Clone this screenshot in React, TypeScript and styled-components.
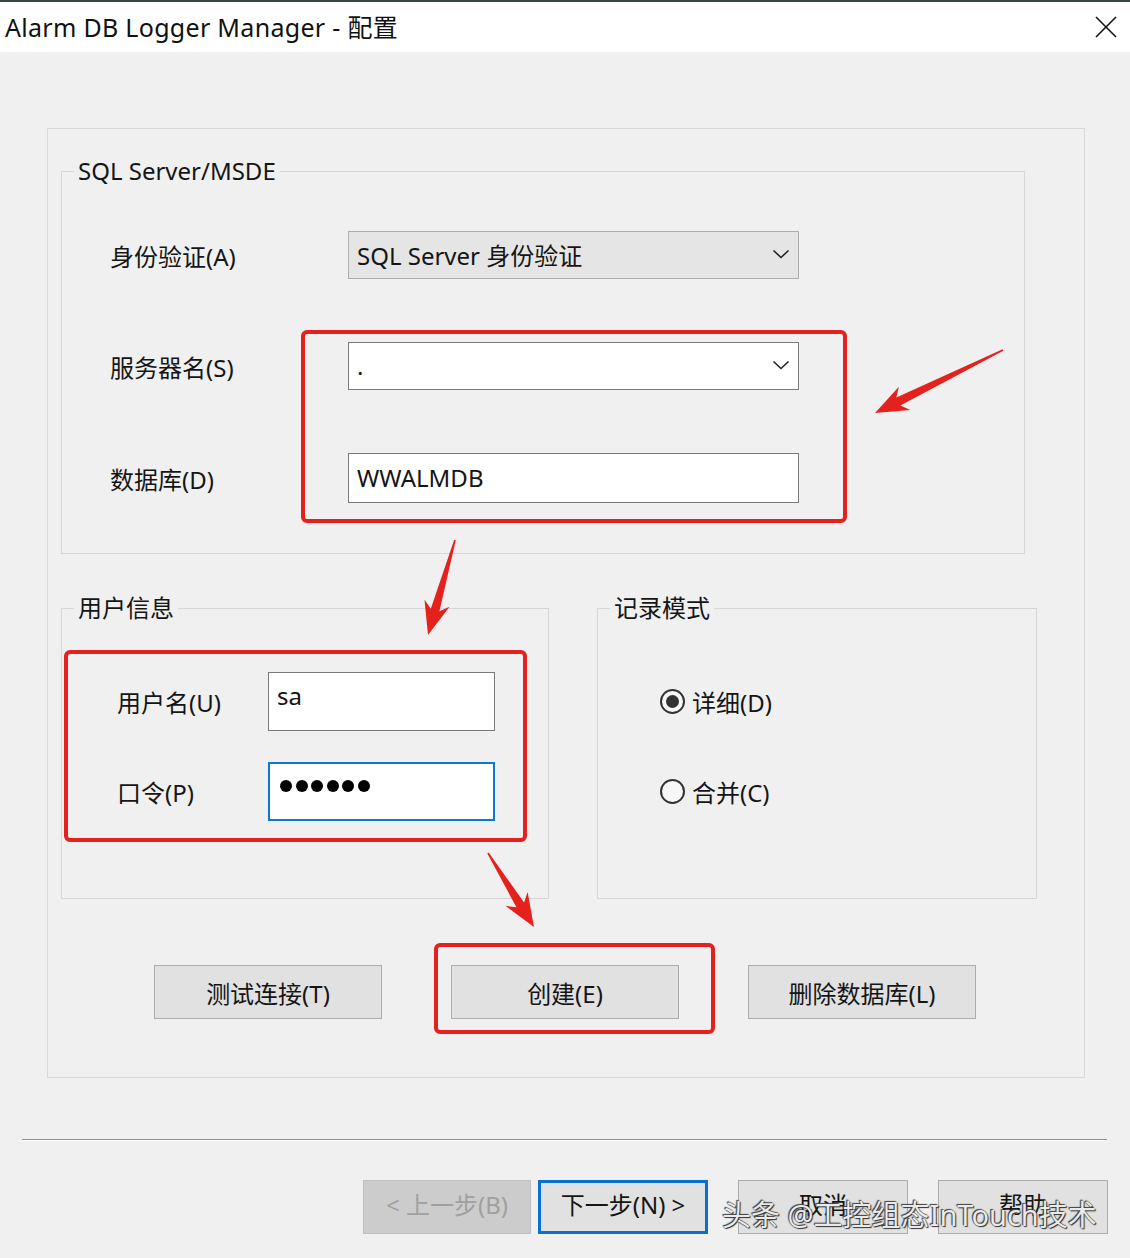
import React from "react";
import styled, { createGlobalStyle } from "styled-components";

const GlobalStyle = createGlobalStyle`
  html, body {
    margin: 0;
    padding: 0;
    background: #f0f0f0;
  }
  body {
    font-family: "Noto Sans", "Noto Sans CJK SC", sans-serif;
    color: #151515;
  }
`;

const Window = styled.div`
  position: relative;
  width: 1130px;
  height: 1258px;
  background: #f0f0f0;
  overflow: hidden;
`;

const TitleBar = styled.div`
  height: 50px;
  border-top: 2px solid #3b4646;
  background: #fff;
  display: flex;
  align-items: center;
  justify-content: space-between;
  padding: 0 13px 0 5px;
`;

const Title = styled.span`
  font-size: 25px;
  letter-spacing: 0.3px;
  color: #111;
  padding-bottom: 2px;
`;

const Body = styled.div`
  padding: 76px 0 0 47px;
`;

const Panel = styled.div`
  box-sizing: border-box;
  width: 1038px;
  height: 950px;
  border: 1px solid #d8d8d8;
  padding: 28px 0 0 13px;
`;

const Group = styled.fieldset<{ $w: number; $h: number }>`
  box-sizing: border-box;
  width: ${({ $w }) => $w}px;
  height: ${({ $h }) => $h}px;
  min-width: 0;
  margin: 0;
  padding: 0;
  border: 1px solid #d6d6d6;
`;

const Legend = styled.legend`
  margin-left: 12px;
  padding: 0 4px;
  font-size: 24px;
  line-height: 28px;
  color: #151515;
`;

const ServerGrid = styled.div`
  display: grid;
  grid-template-columns: 238px 451px;
  grid-template-rows: 48px 48px 50px;
  row-gap: 63px;
  padding: 46px 0 0 48px;
`;

const UserGrid = styled.div`
  display: grid;
  grid-template-columns: 151px 227px;
  grid-auto-rows: 59px;
  row-gap: 31px;
  padding: 50px 0 0 55px;
`;

const RadioList = styled.div`
  display: flex;
  flex-direction: column;
  gap: 31px;
  padding: 50px 0 0 62px;
`;

const Label = styled.span`
  display: flex;
  align-items: center;
  font-size: 24px;
  color: #151515;
`;

const Combo = styled.div<{ $disabled?: boolean }>`
  box-sizing: border-box;
  display: flex;
  align-items: center;
  justify-content: space-between;
  padding: 0 8px 2px 8px;
  background: ${({ $disabled }) => ($disabled ? "#e5e5e5" : "#fff")};
  border: 1px solid ${({ $disabled }) => ($disabled ? "#adadad" : "#7a7a7a")};
  font-size: 24px;
`;

const Field = styled.div<{ $focus?: boolean; $top?: boolean }>`
  box-sizing: border-box;
  display: flex;
  align-items: ${({ $top }) => ($top ? "flex-start" : "center")};
  padding: ${({ $top }) => ($top ? "6px 8px 0" : "0 8px 2px")};
  background: #fff;
  border: ${({ $focus }) => ($focus ? "2px solid #0a78d4" : "1px solid #7a7a7a")};
  font-size: 24px;
`;

const Dots = styled.div`
  display: flex;
  gap: 3.5px;
  padding: 10px 0 0 2px;
`;

const Dot = styled.span`
  width: 12px;
  height: 12px;
  border-radius: 50%;
  background: #000;
`;

const LowerRow = styled.div`
  display: flex;
  gap: 48px;
  margin-top: 40px;
`;

const Radio = styled.div`
  height: 59px;
  display: flex;
  align-items: center;
  gap: 7px;
  font-size: 24px;
  color: #151515;
`;

const RadioCircle = styled.span<{ $checked?: boolean }>`
  box-sizing: border-box;
  flex-shrink: 0;
  width: 25px;
  height: 25px;
  border-radius: 50%;
  border: 2px solid #333;
  background: #f7f7f7;
  display: flex;
  align-items: center;
  justify-content: center;

  &::after {
    content: "";
    width: 13px;
    height: 13px;
    border-radius: 50%;
    background: ${({ $checked }) => ($checked ? "#333" : "transparent")};
  }
`;

const ActionRow = styled.div`
  display: flex;
  gap: 69px;
  margin-top: 66px;
  padding-left: 93px;
`;

const Button = styled.div<{ $w: number }>`
  box-sizing: border-box;
  flex-shrink: 0;
  width: ${({ $w }) => $w}px;
  height: 54px;
  display: flex;
  align-items: center;
  justify-content: center;
  background: #e1e1e1;
  border: 1px solid #adadad;
  font-size: 24px;
  color: #151515;
`;

const Separator = styled.div`
  width: 1085px;
  margin: 61px 0 0 22px;
  border-top: 1px solid #8f8f8f;
  border-bottom: 1px solid #fff;
`;

const WizardRow = styled.div`
  display: flex;
  gap: 30px;
  margin: 39px 0 0 363px;
`;

const BackNext = styled.div`
  display: flex;
  gap: 7px;
`;

const WizardButton = styled(Button)<{ $kind?: "disabled" | "default" }>`
  background: ${({ $kind }) => ($kind === "disabled" ? "#cccccc" : "#e1e1e1")};
  border: ${({ $kind }) =>
    $kind === "default"
      ? "3px solid #0a6fd0"
      : $kind === "disabled"
      ? "1px solid #bfbfbf"
      : "1px solid #adadad"};
  color: ${({ $kind }) => ($kind === "disabled" ? "#a0a0a0" : "#151515")};
  padding-bottom: 8px;
`;

const Watermark = styled.div`
  position: absolute;
  left: 722px;
  top: 1197px;
  font-size: 29px;
  line-height: 36px;
  color: rgba(255, 255, 255, 0.92);
  text-shadow: 0 0 1px #222, 1px 1px 1px #333, -1px -1px 1px #444;
  white-space: nowrap;
`;

const Annotations = styled.svg`
  position: absolute;
  left: 0;
  top: 0;
  pointer-events: none;
`;

const RED = "#e4211c";

function Arrow({ x, y, tx, ty }: { x: number; y: number; tx: number; ty: number }) {
  const dx = tx - x;
  const dy = ty - y;
  const len = Math.sqrt(dx * dx + dy * dy);
  const angle = (Math.atan2(dy, dx) * 180) / Math.PI;
  const pts = [
    [0, -0.8],
    [len - 26, -4.5],
    [len - 33, -13],
    [len, 0],
    [len - 33, 13],
    [len - 26, 4.5],
    [0, 0.8],
  ]
    .map((p) => p.join(","))
    .join(" ");
  return (
    <polygon
      points={pts}
      fill={RED}
      transform={`translate(${x} ${y}) rotate(${angle})`}
    />
  );
}

function Chevron() {
  return (
    <svg width="18" height="10" viewBox="0 0 18 10">
      <polyline points="1.5,1.5 9,8.5 16.5,1.5" fill="none" stroke="#222" strokeWidth="1.6" />
    </svg>
  );
}

function CloseIcon() {
  return (
    <svg width="22" height="22" viewBox="0 0 22 22">
      <line x1="1" y1="1" x2="21" y2="21" stroke="#111" strokeWidth="1.6" />
      <line x1="21" y1="1" x2="1" y2="21" stroke="#111" strokeWidth="1.6" />
    </svg>
  );
}

export default function App() {
  return (
    <Window>
      <GlobalStyle />
      <TitleBar>
        <Title>Alarm DB Logger Manager - 配置</Title>
        <CloseIcon />
      </TitleBar>

      <Body>
        <Panel>
          <Group $w={964} $h={397}>
            <Legend>SQL Server/MSDE</Legend>
            <ServerGrid>
              <Label>身份验证(A)</Label>
              <Combo $disabled>
                <span>SQL Server 身份验证</span>
                <Chevron />
              </Combo>
              <Label>服务器名(S)</Label>
              <Combo>
                <span>.</span>
                <Chevron />
              </Combo>
              <Label>数据库(D)</Label>
              <Field>WWALMDB</Field>
            </ServerGrid>
          </Group>

          <LowerRow>
            <Group $w={488} $h={305}>
              <Legend>用户信息</Legend>
              <UserGrid>
                <Label>用户名(U)</Label>
                <Field $top>sa</Field>
                <Label>口令(P)</Label>
                <Field $top $focus>
                  <Dots>
                    {Array.from({ length: 6 }).map((_, i) => (
                      <Dot key={i} />
                    ))}
                  </Dots>
                </Field>
              </UserGrid>
            </Group>
            <Group $w={440} $h={305}>
              <Legend>记录模式</Legend>
              <RadioList>
                <Radio>
                  <RadioCircle $checked />
                  详细(D)
                </Radio>
                <Radio>
                  <RadioCircle />
                  合并(C)
                </Radio>
              </RadioList>
            </Group>
          </LowerRow>

          <ActionRow>
            <Button $w={228}>测试连接(T)</Button>
            <Button $w={228}>创建(E)</Button>
            <Button $w={228}>删除数据库(L)</Button>
          </ActionRow>
        </Panel>
      </Body>

      <Separator />

      <WizardRow>
        <BackNext>
          <WizardButton $w={168} $kind="disabled">&lt; 上一步(B)</WizardButton>
          <WizardButton $w={170} $kind="default">下一步(N) &gt;</WizardButton>
        </BackNext>
        <WizardButton $w={170}>取消</WizardButton>
        <WizardButton $w={170}>帮助</WizardButton>
      </WizardRow>

      <Watermark>头条 @工控组态InTouch技术</Watermark>

      <Annotations width={1130} height={1258} viewBox="0 0 1130 1258">
        <rect x={303} y={332} width={542} height={189} rx={4} fill="none" stroke={RED} strokeWidth={4} />
        <rect x={66} y={652} width={459} height={188} rx={4} fill="none" stroke={RED} strokeWidth={4} />
        <rect x={436} y={945} width={277} height={87} rx={4} fill="none" stroke={RED} strokeWidth={4} />
        <Arrow x={1003} y={350} tx={875} ty={413} />
        <Arrow x={455} y={540} tx={428} ty={635} />
        <Arrow x={488} y={853} tx={534} ty={927} />
      </Annotations>
    </Window>
  );
}
